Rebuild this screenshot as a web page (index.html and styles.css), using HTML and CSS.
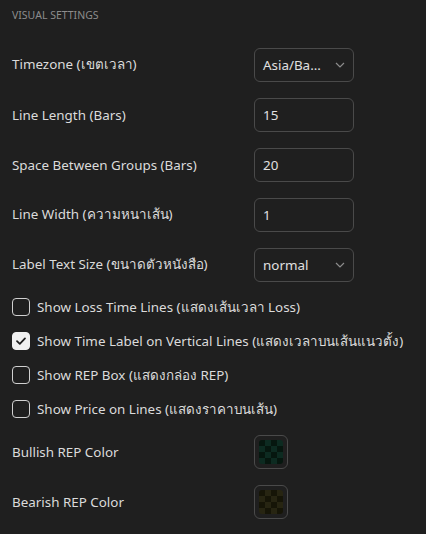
FILE: index.html
```html
<!DOCTYPE html>
<html lang="en">
<head>
  <meta charset="UTF-8" />
  <title>Visual Settings</title>
  <link rel="stylesheet" href="styles.css">
</head>
<body>
  <div class="panel">
    <div class="section-title">VISUAL SETTINGS</div>

    <div class="rows">
      <div class="row">
        <span class="label">Timezone (เขตเวลา)</span>
        <div class="select">
          <span>Asia/Ba...</span>
          <svg class="chev" width="10" height="6" viewBox="0 0 10 6"><path d="M1 1l4 4 4-4" fill="none" stroke="#8c8c8c" stroke-width="1.2"/></svg>
        </div>
      </div>
      <div class="row">
        <span class="label">Line Length (Bars)</span>
        <div class="input">15</div>
      </div>
      <div class="row">
        <span class="label">Space Between Groups (Bars)</span>
        <div class="input">20</div>
      </div>
      <div class="row">
        <span class="label">Line Width (ความหนาเส้น)</span>
        <div class="input">1</div>
      </div>
      <div class="row">
        <span class="label">Label Text Size (ขนาดตัวหนังสือ)</span>
        <div class="select">
          <span>normal</span>
          <svg class="chev" width="10" height="6" viewBox="0 0 10 6"><path d="M1 1l4 4 4-4" fill="none" stroke="#8c8c8c" stroke-width="1.2"/></svg>
        </div>
      </div>
    </div>

    <div class="checks">
      <label class="check"><span class="box"></span>Show Loss Time Lines (แสดงเส้นเวลา Loss)</label>
      <label class="check"><span class="box checked"><svg width="12" height="10" viewBox="0 0 12 10"><path d="M2 5.2l2.8 2.6L10 2.4" fill="none" stroke="#1f1f1f" stroke-width="1.8" stroke-linecap="round" stroke-linejoin="round"/></svg></span>Show Time Label on Vertical Lines (แสดงเวลาบนเส้นแนวตั้ง)</label>
      <label class="check"><span class="box"></span>Show REP Box (แสดงกล่อง REP)</label>
      <label class="check"><span class="box"></span>Show Price on Lines (แสดงราคาบนเส้น)</label>
    </div>

    <div class="rows colors">
      <div class="row">
        <span class="label">Bullish REP Color</span>
        <div class="swatch"><span class="chip bull"></span></div>
      </div>
      <div class="row">
        <span class="label">Bearish REP Color</span>
        <div class="swatch"><span class="chip bear"></span></div>
      </div>
    </div>
  </div>
</body>
</html>
```

FILE: styles.css
```css
* { margin: 0; padding: 0; box-sizing: border-box; }
body {
  background-color: #1f1f1f;
  color: #dbdbdb;
  font-family: "Noto Sans", "Open Sans", sans-serif;
  font-size: 13.4px;
}
.panel {
  padding: 6px 12px 0 12px;
}
.section-title {
  font-size: 10.5px;
  color: #8c8c8c;
  height: 18px;
  line-height: 18px;
  margin-bottom: 24px;
}
.rows {
  display: flex;
  flex-direction: column;
  gap: 16px;
}
.row {
  display: grid;
  grid-template-columns: 242px 100px;
  align-items: center;
  height: 34px;
}
.label {
  padding-bottom: 1px;
}
.select,
.input {
  height: 34px;
  border: 1px solid #4a4a4a;
  border-radius: 6px;
  padding: 0 8px;
  display: flex;
  align-items: center;
  color: #e0e0e0;
}
.select {
  justify-content: space-between;
  padding-right: 8px;
}
.checks {
  display: flex;
  flex-direction: column;
  gap: 16px;
  margin-top: 16px;
}
.check {
  display: flex;
  align-items: center;
  gap: 7px;
  height: 18px;
  white-space: nowrap;
}
.box {
  width: 18px;
  height: 18px;
  border: 1px solid #d0d0d0;
  border-radius: 4px;
  flex-shrink: 0;
  display: flex;
  align-items: center;
  justify-content: center;
}
.box.checked {
  background-color: #f0f0f0;
  border-color: #f0f0f0;
}
.colors {
  margin-top: 17px;
}
.swatch {
  width: 34px;
  height: 34px;
  border: 1px solid #4a4a4a;
  border-radius: 6px;
  display: flex;
  align-items: center;
  justify-content: center;
}
.chip {
  width: 24px;
  height: 24px;
  border-radius: 3px;
  background-size: 12px 12px;
}
.chip.bull {
  background-color: #06170f;
  background-image: conic-gradient(#0d2b21 25%, transparent 0 50%, #0d2b21 0 75%, transparent 0);
}
.chip.bear {
  background-color: #161507;
  background-image: conic-gradient(#272512 25%, transparent 0 50%, #272512 0 75%, transparent 0);
}
```
